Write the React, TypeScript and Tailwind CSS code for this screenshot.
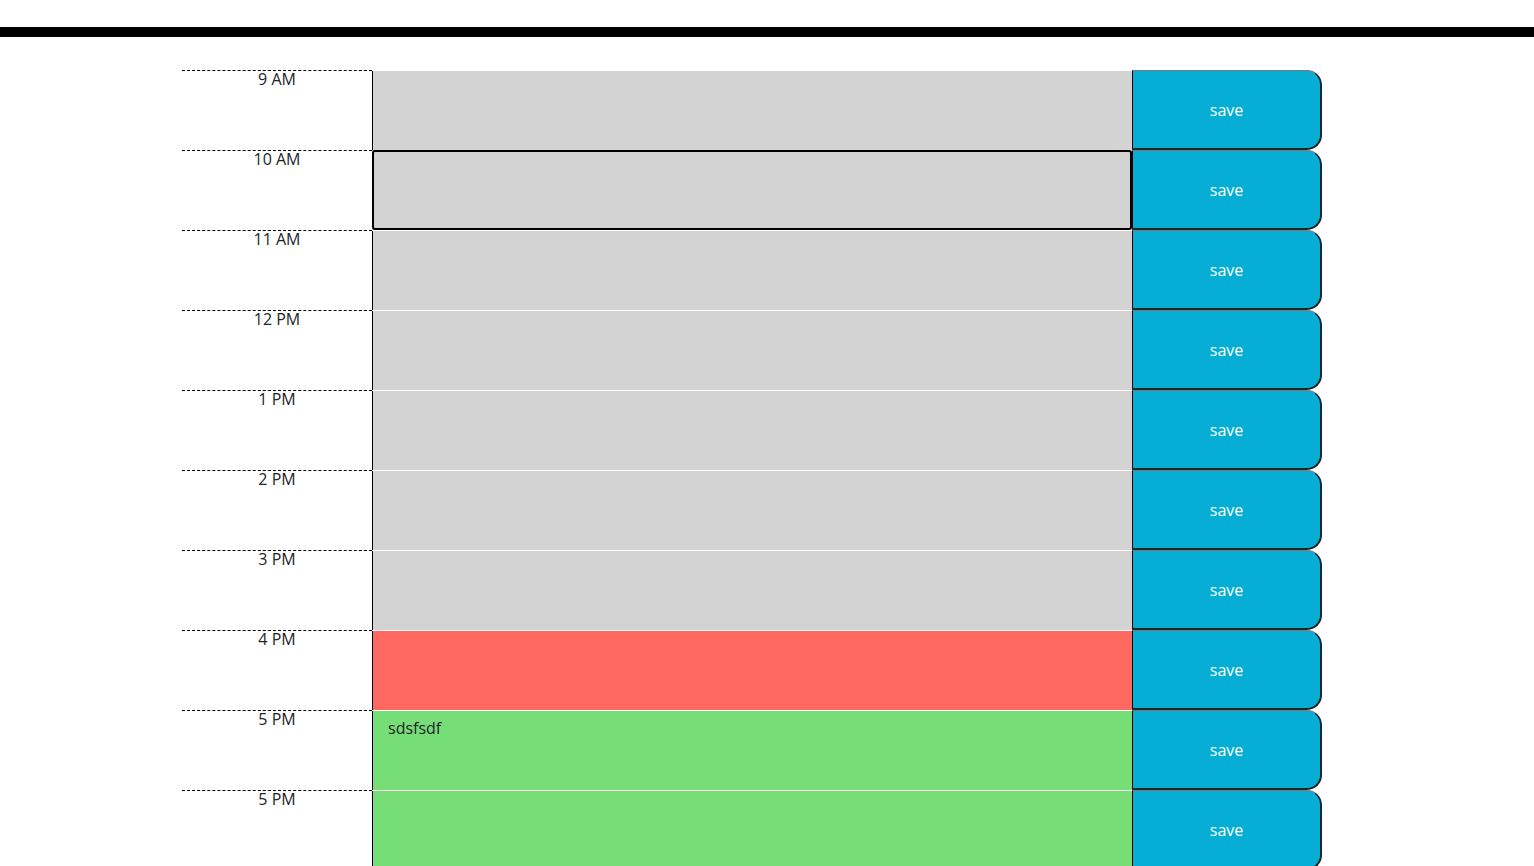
import React from 'react';

type Slot = { label: string; tone: 'past' | 'present' | 'future'; text?: string; focused?: boolean };

const slots: Slot[] = [
  { label: '9 AM', tone: 'past' },
  { label: '10 AM', tone: 'past', focused: true },
  { label: '11 AM', tone: 'past' },
  { label: '12 PM', tone: 'past' },
  { label: '1 PM', tone: 'past' },
  { label: '2 PM', tone: 'past' },
  { label: '3 PM', tone: 'past' },
  { label: '4 PM', tone: 'present' },
  { label: '5 PM', tone: 'future', text: 'sdsfsdf' },
  { label: '5 PM', tone: 'future' },
];

const toneClass = {
  past: 'bg-[#d3d3d3]',
  present: 'bg-[#ff6961]',
  future: 'bg-[#77dd77]',
};

const App = () => {
  return (
    <div className="min-h-screen bg-white text-[#212529]" style={{ fontFamily: '"Open Sans", "Noto Sans", sans-serif' }}>
      {/* Header */}
      <header className="pt-[27px] border-b-[10px] border-black" />

      {/* Time blocks */}
      <div className="ml-[182px] w-[1140px] pt-[33px]">
        {slots.map((slot, i) => (
          <div key={i} className="flex h-20">
            <div className="w-[190px] border-t border-dashed border-black text-center text-base leading-4">
              {slot.label}
            </div>
            <div className={`w-[760px] ${slot.focused ? '' : 'border-t border-white'} ${toneClass[slot.tone]}`}>
              <textarea
                readOnly
                value={slot.text ?? ''}
                className={`block w-full h-full resize-none bg-transparent px-[15px] py-[5px] text-base text-[#212529] outline-none ${
                  slot.focused ? 'border-2 border-black rounded-[3px]' : 'border-l border-black'
                }`}
                style={{ fontFamily: '"Open Sans", "Noto Sans", sans-serif' }}
              />
            </div>
            <button
              className="w-[190px] h-full bg-[#06aed5] text-white text-base border-t border-t-[#7a7a7a] border-l border-l-black border-r-2 border-b-2 border-r-[#222] border-b-[#222] rounded-tr-[15px] rounded-br-[15px]"
              style={{ fontFamily: '"Open Sans", "Noto Sans", sans-serif' }}
            >
              save
            </button>
          </div>
        ))}
      </div>
    </div>
  );
};

export default App;
